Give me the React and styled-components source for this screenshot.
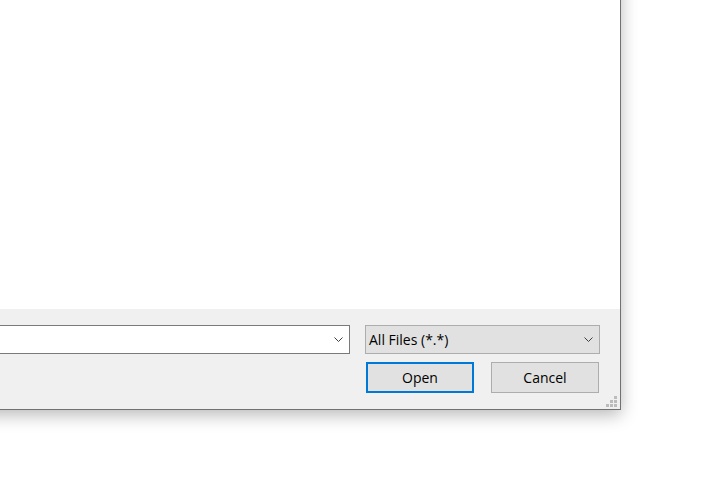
import styled, { createGlobalStyle } from 'styled-components';

const GlobalStyle = createGlobalStyle`
  html, body {
    margin: 0;
    padding: 0;
    background: #ffffff;
    overflow: hidden;
  }

  body {
    font-family: "Open Sans", "Noto Sans", "Liberation Sans", sans-serif;
    font-size: 14px;
    color: #000000;
  }
`;

const Chevron = () => (
  <svg width="9" height="5" viewBox="0 0 9 5" aria-hidden="true">
    <polyline points="0.5,0.5 4.5,4.5 8.5,0.5" fill="none" stroke="#404040" strokeWidth="1" />
  </svg>
);

const Grip = () => (
  <GripWrap width="11" height="11" viewBox="0 0 11 11" aria-hidden="true">
    <rect x="8" y="0" width="3" height="3" />
    <rect x="4" y="4" width="3" height="3" />
    <rect x="8" y="4" width="3" height="3" />
    <rect x="0" y="8" width="3" height="3" />
    <rect x="4" y="8" width="3" height="3" />
    <rect x="8" y="8" width="3" height="3" />
  </GripWrap>
);

const App = () => {
  return (
    <>
      <GlobalStyle />
      <Desktop>
        <Dialog>
          <FileList />
          <Footer>
            <ComboRow>
              <Combo $editable>
                <ComboText />
                <Chevron />
              </Combo>
              <Combo $width={235}>
                <ComboText>All Files (*.*)</ComboText>
                <Chevron />
              </Combo>
            </ComboRow>
            <ButtonRow>
              <Button $primary>Open</Button>
              <Button>Cancel</Button>
            </ButtonRow>
            <Grip />
          </Footer>
        </Dialog>
      </Desktop>
    </>
  );
};

const Desktop = styled.div`
  width: 712px;
  height: 492px;
  overflow: hidden;
`;

const Dialog = styled.div`
  box-sizing: border-box;
  display: flex;
  flex-direction: column;
  width: 1021px;
  height: 610px;
  margin-left: -400px;
  margin-top: -200px;
  border: 1px solid #717171;
  background: #f0f0f0;
  box-shadow: 0 5px 16px rgba(0, 0, 0, 0.28);
`;

const FileList = styled.div`
  flex: 1;
  background: #ffffff;
`;

const Footer = styled.div`
  position: relative;
  display: flex;
  flex-direction: column;
  gap: 8px;
  height: 100px;
  box-sizing: border-box;
  padding: 16px 20px 16px 0;
  background: #f0f0f0;
`;

const ComboRow = styled.div`
  display: flex;
  gap: 15px;
  height: 29px;
`;

const Combo = styled.div`
  box-sizing: border-box;
  display: flex;
  align-items: center;
  justify-content: space-between;
  flex: ${(p) => (p.$width ? `0 0 ${p.$width}px` : '1')};
  height: 29px;
  padding: 0 6px 0 3px;
  border: 1px solid ${(p) => (p.$editable ? '#7a7a7a' : '#adadad')};
  background: ${(p) => (p.$editable ? '#ffffff' : '#e1e1e1')};

  svg {
    flex-shrink: 0;
  }
`;

const ComboText = styled.span`
  font-size: 14px;
  line-height: 27px;
  white-space: nowrap;
`;

const ButtonRow = styled.div`
  display: flex;
  justify-content: flex-end;
  gap: 17px;
  height: 31px;
  margin-right: 1px;
`;

const Button = styled.button`
  box-sizing: border-box;
  width: 108px;
  height: 31px;
  padding: 0;
  font-family: inherit;
  font-size: 14px;
  color: #000000;
  background: #e1e1e1;
  border: ${(p) => (p.$primary ? '2px solid #0078d7' : '1px solid #adadad')};
  border-radius: 0;
`;

const GripWrap = styled.svg`
  position: absolute;
  right: 3px;
  bottom: 2px;
  fill: #bcbcbc;
`;

export default App;
